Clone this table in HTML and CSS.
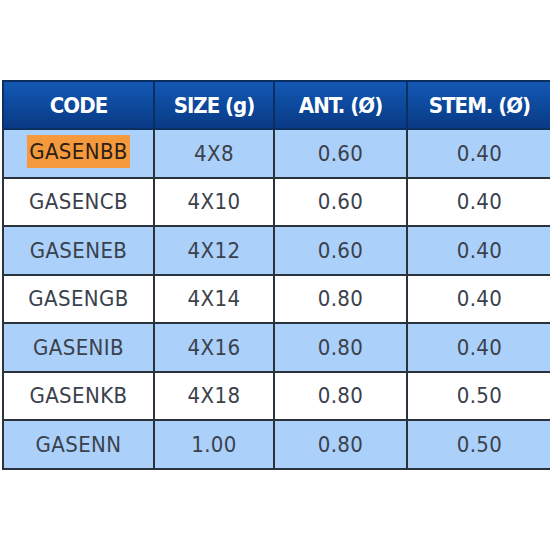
FILE: index.html
```html
<!DOCTYPE html>
<html>
<head>
<meta charset="utf-8">
<link rel="stylesheet" href="styles.css">
</head>
<body>
<div class="page">
  <table class="spec">
    <colgroup>
      <col class="c1"><col class="c2"><col class="c3"><col class="c4">
    </colgroup>
    <thead>
      <tr><th>CODE</th><th>SIZE (g)</th><th>ANT. (Ø)</th><th>STEM. (Ø)</th></tr>
    </thead>
    <tbody>
      <tr class="alt"><td><span class="mark">GASENBB</span></td><td>4X8</td><td>0.60</td><td>0.40</td></tr>
      <tr><td>GASENCB</td><td>4X10</td><td>0.60</td><td>0.40</td></tr>
      <tr class="alt"><td>GASENEB</td><td>4X12</td><td>0.60</td><td>0.40</td></tr>
      <tr><td>GASENGB</td><td>4X14</td><td>0.80</td><td>0.40</td></tr>
      <tr class="alt"><td>GASENIB</td><td>4X16</td><td>0.80</td><td>0.40</td></tr>
      <tr><td>GASENKB</td><td>4X18</td><td>0.80</td><td>0.50</td></tr>
      <tr class="alt"><td>GASENN</td><td>1.00</td><td>0.80</td><td>0.50</td></tr>
    </tbody>
  </table>
</div>
</body>
</html>
```
FILE: styles.css
```css
html, body {
  margin: 0;
  padding: 0;
  background: #ffffff;
}
.page {
  width: 550px;
  height: 550px;
  overflow: hidden;
  padding-top: 80px;
  box-sizing: border-box;
  padding-left: 2px;
}
.spec {
  border-collapse: collapse;
  width: 548px;
  table-layout: fixed;
  font-family: "DejaVu Sans Condensed", "DejaVu Sans", sans-serif;
}
.c1 { width: 151px; }
.c2 { width: 120px; }
.c3 { width: 133px; }
.c4 { width: 144px; }
.spec th, .spec td {
  border: 2px solid #2a323c;
  text-align: center;
  vertical-align: middle;
  padding: 0;
}
.spec th:last-child, .spec td:last-child {
  border-right: none;
}
.spec th {
  height: 46px;
  color: #ffffff;
  font-weight: bold;
  font-size: 22px;
  letter-spacing: -1px;
  background: linear-gradient(#1458b4, #0c4698 60%, #0a3a84);
  border-color: #0b2f5f;
}
.spec td {
  height: 46.5px;
  font-size: 22px;
  color: #3a414c;
  background: #ffffff;
  letter-spacing: 0.4px;
}
.spec tr.alt td {
  background: #abd0fa;
}
.mark {
  display: inline-block;
  background: #f59a3c;
  color: #2a2016;
  line-height: 33px;
  padding: 0 2px;
  margin-top: -4px;
  vertical-align: middle;
}
```
